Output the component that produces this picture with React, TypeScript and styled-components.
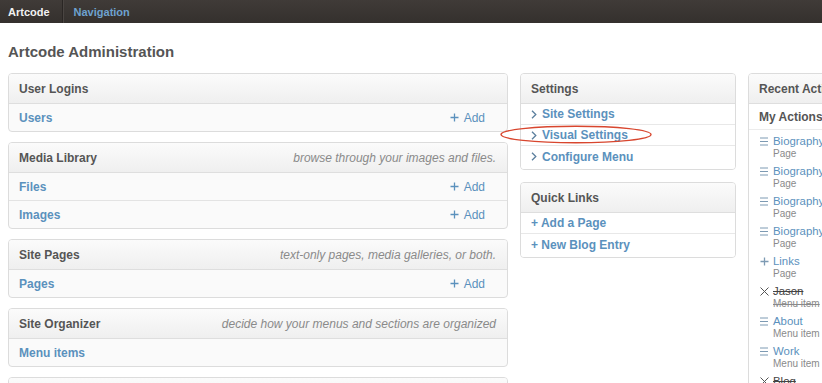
import React from "react";
import styled, { createGlobalStyle } from "styled-components";

const Global = createGlobalStyle`
  html, body { margin: 0; padding: 0; overflow: hidden; background: #fff; }
  body { font-family: "Liberation Sans", Arial, sans-serif; width: 822px; }
  * { box-sizing: border-box; }
`;

const BLUE = "#5b91bd";

const TopBar = styled.div`
  height: 23px;
  display: flex;
  align-items: stretch;
  background: linear-gradient(#403b38, #34302d);
  font-size: 11px;
  font-weight: bold;
`;

const TopItem = styled.div<{ $active?: boolean }>`
  display: flex;
  align-items: center;
  padding: ${(p) => (p.$active ? "0 12px 0 8px" : "0 11px")};
  color: ${(p) => (p.$active ? "#f2f2f2" : "#6ea2cf")};
  border-right: ${(p) => (p.$active ? "1px solid #2a2624" : "none")};
  box-shadow: ${(p) => (p.$active ? "1px 0 0 #4a4542" : "none")};
`;

const Title = styled.h1`
  margin: 20px 0 12px 8px;
  font-size: 15px;
  line-height: 18px;
  font-weight: bold;
  color: #555;
`;

const Columns = styled.div`
  display: grid;
  grid-template-columns: 500px 216px 220px;
  column-gap: 12px;
  padding: 0 8px;
  align-items: start;
`;

const Stack = styled.div<{ $gap: number }>`
  display: flex;
  flex-direction: column;
  gap: ${(p) => p.$gap}px;
`;

const Panel = styled.div<{ $tall?: boolean }>`
  border: 1px solid #dcdcdc;
  border-radius: 4px;
  background: #fafafa;
  min-height: ${(p) => (p.$tall ? "400px" : "0")};
`;

const Header = styled.div`
  height: 30px;
  display: flex;
  align-items: center;
  justify-content: space-between;
  padding: 0 11px 0 10px;
  border-bottom: 1px solid #dedede;
  border-radius: 3px 3px 0 0;
  background: linear-gradient(#fbfbfb, #efefef);
  white-space: nowrap;
  overflow: hidden;
`;

const HeaderTitle = styled.span`
  font-size: 12px;
  font-weight: bold;
  color: #555;
`;

const HeaderNote = styled.span`
  font-size: 12px;
  font-style: italic;
  color: #8a8a8a;
`;

const Row = styled.div`
  height: 28px;
  display: flex;
  align-items: center;
  justify-content: space-between;
  padding: 0 22px 0 10px;
  border-bottom: 1px solid #e3e3e3;
  &:last-child { border-bottom: none; height: 27px; }
`;

const RowLink = styled.span`
  font-size: 12px;
  font-weight: bold;
  color: ${BLUE};
`;

const AddLink = styled.span`
  display: flex;
  align-items: center;
  gap: 5px;
  font-size: 12px;
  color: ${BLUE};
`;

const LinkList = styled.div`
  padding-bottom: 2px;
  background: #fff;
  border-radius: 0 0 3px 3px;
`;

const LinkRow = styled.div`
  height: 21px;
  display: flex;
  align-items: center;
  gap: 5px;
  padding: 0 10px;
  border-bottom: 1px solid #e8e8e8;
  font-size: 12px;
  font-weight: bold;
  color: ${BLUE};
  white-space: nowrap;
  &:last-child { border-bottom: none; }
`;

const SubHeader = styled.div`
  height: 26px;
  display: flex;
  align-items: center;
  padding: 0 10px;
  font-size: 12px;
  font-weight: bold;
  color: #555;
  background: #fff;
  border-bottom: 1px solid #ececec;
  white-space: nowrap;
`;

const ActionList = styled.div`
  background: #fff;
  padding-left: 11px;
`;

const Action = styled.div`
  height: 30px;
  padding-top: 4px;
  display: grid;
  grid-template-columns: 13px auto;
  white-space: nowrap;
`;

const ActionIcon = styled.div`
  height: 14px;
  display: flex;
  align-items: center;
`;

const ActionTitle = styled.div<{ $removed?: boolean }>`
  font-size: 11.4px;
  line-height: 14px;
  color: ${(p) => (p.$removed ? "#444" : BLUE)};
  text-decoration: ${(p) => (p.$removed ? "line-through" : "none")};
`;

const ActionSub = styled.div<{ $removed?: boolean }>`
  grid-column: 2;
  font-size: 10px;
  line-height: 12px;
  color: #8a8a8a;
  text-decoration: ${(p) => (p.$removed ? "line-through" : "none")};
`;

const Annotated = styled.div`
  position: relative;
`;

const Ellipse = styled.svg`
  position: absolute;
  left: -21px;
  top: 0px;
  pointer-events: none;
  overflow: visible;
`;

const Plus = ({ color = BLUE, size = 9 }: { color?: string; size?: number }) => (
  <svg width={size} height={size} viewBox="0 0 9 9">
    <path d="M4.5 0.5v8M0.5 4.5h8" stroke={color} strokeWidth="1.3" />
  </svg>
);

const Chevron = () => (
  <svg width="6" height="9" viewBox="0 0 6 9">
    <path d="M1 0.8L4.8 4.5L1 8.2" stroke="#5b7f9e" strokeWidth="1.3" fill="none" />
  </svg>
);

const Lines = () => (
  <svg width="9" height="9" viewBox="0 0 9 9">
    <path d="M0 1h8M0 4.5h8M0 8h8" stroke="#7d9ab3" strokeWidth="1" />
  </svg>
);

const Cross = () => (
  <svg width="9" height="9" viewBox="0 0 9 9">
    <path d="M0.5 0.5l8 8M8.5 0.5l-8 8" stroke="#555" strokeWidth="1" />
  </svg>
);

type Item = { title: string; sub: string; kind: "edit" | "add" | "del" };
const actions: Item[] = [
  { title: "Biography", sub: "Page", kind: "edit" },
  { title: "Biography", sub: "Page", kind: "edit" },
  { title: "Biography", sub: "Page", kind: "edit" },
  { title: "Biography", sub: "Page", kind: "edit" },
  { title: "Links", sub: "Page", kind: "add" },
  { title: "Jason", sub: "Menu item", kind: "del" },
  { title: "About", sub: "Menu item", kind: "edit" },
  { title: "Work", sub: "Menu item", kind: "edit" },
  { title: "Blog", sub: "Menu item", kind: "del" },
];

type Section = { title: string; note?: string; rows: { label: string; add?: boolean }[] };
const sections: Section[] = [
  { title: "User Logins", rows: [{ label: "Users", add: true }] },
  {
    title: "Media Library",
    note: "browse through your images and files.",
    rows: [
      { label: "Files", add: true },
      { label: "Images", add: true },
    ],
  },
  {
    title: "Site Pages",
    note: "text-only pages, media galleries, or both.",
    rows: [{ label: "Pages", add: true }],
  },
  {
    title: "Site Organizer",
    note: "decide how your menus and sections are organized",
    rows: [{ label: "Menu items" }],
  },
];

export default function App() {
  return (
    <>
      <Global />
      <TopBar>
        <TopItem $active>Artcode</TopItem>
        <TopItem>Navigation</TopItem>
      </TopBar>
      <Title>Artcode Administration</Title>
      <Columns>
        <Stack $gap={10}>
          {sections.map((s) => (
            <Panel key={s.title}>
              <Header>
                <HeaderTitle>{s.title}</HeaderTitle>
                {s.note && <HeaderNote>{s.note}</HeaderNote>}
              </Header>
              {s.rows.map((r) => (
                <Row key={r.label}>
                  <RowLink>{r.label}</RowLink>
                  {r.add && (
                    <AddLink>
                      <Plus />
                      Add
                    </AddLink>
                  )}
                </Row>
              ))}
            </Panel>
          ))}
          <Panel>
            <Header />
          </Panel>
        </Stack>
        <Stack $gap={12}>
          <Panel>
            <Header>
              <HeaderTitle>Settings</HeaderTitle>
            </Header>
            <LinkList>
              <LinkRow>
                <Chevron />
                Site Settings
              </LinkRow>
              <Annotated>
                <LinkRow>
                  <Chevron />
                  Visual Settings
                </LinkRow>
                <Ellipse width="152" height="19" viewBox="0 0 152 19">
                  <ellipse cx="76" cy="9.5" rx="75" ry="8.3" fill="none" stroke="#d8462e" strokeWidth="1.4" />
                </Ellipse>
              </Annotated>
              <LinkRow>
                <Chevron />
                Configure Menu
              </LinkRow>
            </LinkList>
          </Panel>
          <Panel>
            <Header>
              <HeaderTitle>Quick Links</HeaderTitle>
            </Header>
            <LinkList>
              <LinkRow>+ Add a Page</LinkRow>
              <LinkRow>+ New Blog Entry</LinkRow>
            </LinkList>
          </Panel>
        </Stack>
        <Panel $tall>
          <Header>
            <HeaderTitle>Recent Actions</HeaderTitle>
          </Header>
          <SubHeader>My Actions</SubHeader>
          <ActionList>
            {actions.map((a, i) => (
              <Action key={i}>
                <ActionIcon>
                  {a.kind === "edit" ? <Lines /> : a.kind === "add" ? <Plus color="#7d9ab3" /> : <Cross />}
                </ActionIcon>
                <ActionTitle $removed={a.kind === "del"}>{a.title}</ActionTitle>
                <ActionSub $removed={a.kind === "del"}>{a.sub}</ActionSub>
              </Action>
            ))}
          </ActionList>
        </Panel>
      </Columns>
    </>
  );
}
